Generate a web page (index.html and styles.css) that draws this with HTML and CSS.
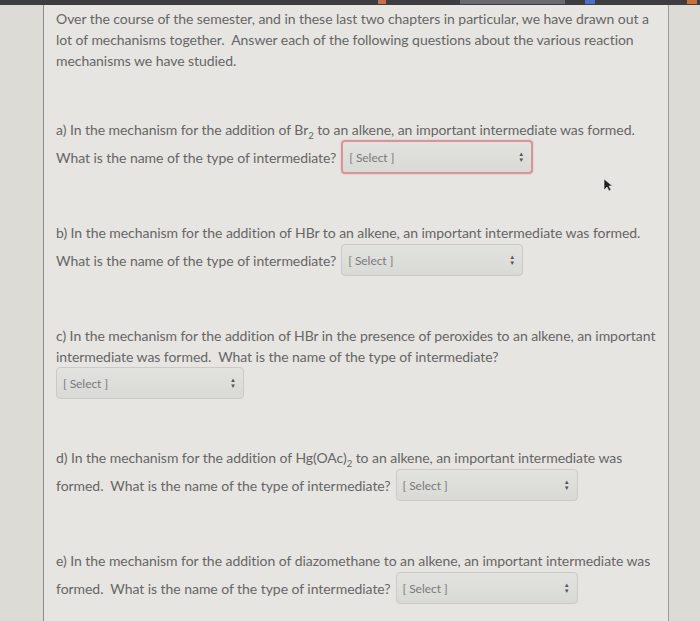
FILE: index.html
```html
<!DOCTYPE html>
<html>
<head>
<meta charset="utf-8">
<link rel="stylesheet" href="styles.css">
</head>
<body>
<div class="topbar">
  <span class="tab t1"></span><span class="tab t2"></span><span class="tab t3"></span><span class="tab t4"></span>
</div>
<div class="page">
  <div class="content">
    <p class="intro">Over the course of the semester, and in these last two chapters in particular, we have drawn out a lot of mechanisms together.&nbsp; Answer each of the following questions about the various reaction mechanisms we have studied.</p>

    <div class="q">
      <div class="line">a) In the mechanism for the addition of Br<sub>2</sub> to an alkene, an important intermediate was formed.</div>
      <div class="row"><span>What is the name of the type of intermediate?</span>
        <div class="select focus"><span class="ph">[ Select ]</span><span class="arrows">&#9650;<br>&#9660;</span></div>
      </div>
    </div>

    <div class="q">
      <div class="line">b) In the mechanism for the addition of HBr to an alkene, an important intermediate was formed.</div>
      <div class="row"><span>What is the name of the type of intermediate?</span>
        <div class="select"><span class="ph">[ Select ]</span><span class="arrows">&#9650;<br>&#9660;</span></div>
      </div>
    </div>

    <div class="q">
      <div class="line">c) In the mechanism for the addition of HBr in the presence of peroxides to an alkene, an important</div>
      <div class="line">intermediate was formed.&nbsp; What is the name of the type of intermediate?</div>
      <div class="row short">
        <div class="select c"><span class="ph">[ Select ]</span><span class="arrows">&#9650;<br>&#9660;</span></div>
      </div>
    </div>

    <div class="q">
      <div class="line">d) In the mechanism for the addition of Hg(OAc)<sub>2</sub> to an alkene, an important intermediate was</div>
      <div class="row"><span>formed.&nbsp; What is the name of the type of intermediate?</span>
        <div class="select"><span class="ph">[ Select ]</span><span class="arrows">&#9650;<br>&#9660;</span></div>
      </div>
    </div>

    <div class="q">
      <div class="line">e) In the mechanism for the addition of diazomethane to an alkene, an important intermediate was</div>
      <div class="row"><span>formed.&nbsp; What is the name of the type of intermediate?</span>
        <div class="select"><span class="ph">[ Select ]</span><span class="arrows">&#9650;<br>&#9660;</span></div>
      </div>
    </div>
  </div>
  <svg class="cursor" width="10" height="14" viewBox="0 0 10 14"><path d="M1 1 L1 12 L4 9 L6 13 L8 12 L6 8 L9.5 8 Z" fill="#222" stroke="#eee" stroke-width="0.6"/></svg>
</div>
</body>
</html>
```
FILE: styles.css
```css
html, body {
  margin: 0;
  padding: 0;
}
body {
  width: 700px;
  height: 621px;
  overflow: hidden;
  background: #dcdbd6;
  font-family: Lato, "Open Sans", sans-serif;
  color: #666666;
  position: relative;
}
.topbar {
  height: 5px;
  background: #3d3d40;
  position: relative;
}
.tab {
  position: absolute;
  top: 0;
  height: 4px;
}
.t1 { left: 378px; width: 8px; background: #c0704a; }
.t2 { left: 460px; width: 105px; background: #6a6a6e; }
.t3 { left: 585px; width: 10px; background: #4a6fc8; }
.t4 { left: 687px; width: 10px; background: #c8703e; }
.page {
  position: relative;
  margin-left: 43px;
  width: 624px;
  height: 616px;
  background: #e6e5e1;
  border-left: 1px solid #8e8e8c;
  border-right: 1px solid #9a9a98;
}
.content {
  padding: 3px 0 0 12px;
  display: flex;
  flex-direction: column;
  gap: 48px;
  font-size: 14px;
  letter-spacing: -0.05px;
}
.intro {
  margin: 0;
  line-height: 21px;
  width: 602px;
}
.q {
  display: flex;
  flex-direction: column;
}
.line {
  line-height: 21px;
  white-space: nowrap;
}
sub {
  font-size: 9.5px;
  line-height: 0;
}
.row {
  display: flex;
  align-items: center;
  height: 34px;
  gap: 5px;
  white-space: nowrap;
}
.row.short {
  height: 32px;
}
.select {
  box-sizing: border-box;
  width: 182px;
  height: 32px;
  border: 1px solid #cbcac6;
  border-radius: 4px;
  background: linear-gradient(#e2e2df, #d9d9d6);
  display: flex;
  align-items: center;
  justify-content: space-between;
  padding: 0 7px 0 6px;
  font-size: 12px;
  color: #7a7a7a;
}
.select.focus {
  width: 192px;
  height: 34px;
  border: 2px solid #d9939a;
  box-shadow: 0 0 2px #e2a8ad;
}
.select.c {
  width: 188px;
}
.arrows {
  font-size: 6px;
  line-height: 6px;
  color: #555;
  text-align: center;
}
.cursor {
  position: absolute;
  left: 559px;
  top: 173px;
}
```
